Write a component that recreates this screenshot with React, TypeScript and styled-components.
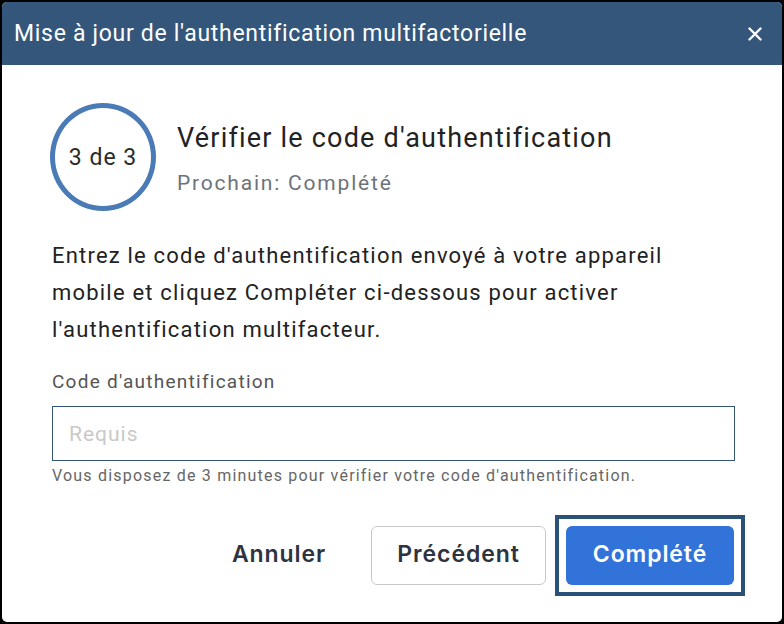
import React from "react";
import styled, { createGlobalStyle } from "styled-components";

const Global = createGlobalStyle`
  html, body { margin: 0; padding: 0; background: #000; }
  body { font-family: Roboto, "Liberation Sans", sans-serif; }
  * { box-sizing: border-box; }
`;

const Dialog = styled.div`
  margin: 2px;
  width: 780px;
  height: 620px;
  background: #fff;
  border-radius: 5px;
  overflow: hidden;
  display: flex;
  flex-direction: column;
`;

const Header = styled.div`
  height: 63px;
  background: #34567b;
  display: flex;
  align-items: center;
  justify-content: space-between;
  padding: 0 20px 0 12px;
`;

const HeaderTitle = styled.h1`
  margin: 0;
  font-family: Roboto, sans-serif;
  font-weight: 400;
  font-size: 23px;
  letter-spacing: 0.7px;
  color: #fff;
`;

const CloseButton = styled.button`
  border: none;
  background: transparent;
  color: #fff;
  padding: 0;
  display: flex;
  cursor: pointer;
`;

const Body = styled.div`
  flex: 1;
  padding: 38px 48px 0 48px;
  display: flex;
  flex-direction: column;
`;

const StepRow = styled.div`
  display: flex;
  align-items: center;
  gap: 21px;
`;

const StepCircle = styled.div`
  width: 106px;
  height: 108px;
  border-radius: 50%;
  border: 5px solid #4a7bb6;
  display: flex;
  align-items: center;
  justify-content: center;
  font-size: 23px;
  letter-spacing: 1px;
  color: #2b2b2b;
  flex-shrink: 0;
`;

const StepText = styled.div`
  display: flex;
  flex-direction: column;
  gap: 17px;
  margin-top: 2px;
`;

const StepTitle = styled.div`
  font-size: 27px;
  letter-spacing: 1.2px;
  color: #222;
`;

const StepNext = styled.div`
  font-size: 21px;
  letter-spacing: 1.8px;
  color: #6c737c;
`;

const Description = styled.p`
  margin: 26px 0 0 2px;
  font-size: 22px;
  line-height: 37px;
  letter-spacing: 1.2px;
  color: #222;
`;

const Label = styled.label`
  margin: 22px 0 0 2px;
  font-size: 19px;
  letter-spacing: 1.25px;
  color: #555;
`;

const Input = styled.input`
  margin: 13px 0 0 2px;
  width: 683px;
  height: 55px;
  border: 1px solid #34567b;
  padding: 0 16px;
  font-family: Roboto, sans-serif;
  font-size: 21px;
  letter-spacing: 1px;
  outline: none;
  &::placeholder { color: #c9c9c9; }
`;

const Helper = styled.div`
  margin: 5px 0 0 2px;
  font-size: 16px;
  letter-spacing: 1.2px;
  color: #666;
`;

const Footer = styled.div`
  display: flex;
  justify-content: flex-end;
  align-items: center;
  gap: 9px;
  padding: 0 37px 26px 0;
`;

const FocusRing = styled.div`
  border: 4px solid #2a5178;
  padding: 7px;
  display: flex;
`;

const Button = styled.button<{ $variant: "text" | "outline" | "primary" }>`
  font-family: Inter, Roboto, sans-serif;
  font-weight: 600;
  font-size: 23px;
  letter-spacing: 0.9px;
  height: 59px;
  border-radius: 6px;
  cursor: pointer;
  padding: 0 0 3px;
  display: flex;
  align-items: center;
  justify-content: center;
  ${(p) =>
    p.$variant === "text"
      ? `background: transparent; border: none; color: #2d3340; width: 130px; margin-right: 18px;`
      : p.$variant === "outline"
      ? `background: #fff; border: 1px solid #c8c8c8; color: #2d3340; width: 175px;`
      : `background: #3273d9; border: none; color: #fff; width: 168px;`}
`;

export default function App() {
  return (
    <>
      <Global />
      <Dialog>
        <Header>
          <HeaderTitle>Mise à jour de l'authentification multifactorielle</HeaderTitle>
          <CloseButton aria-label="Fermer">
            <svg width="14" height="14" viewBox="0 0 14 14">
              <path d="M1.5 1.5 L12.5 12.5 M12.5 1.5 L1.5 12.5" stroke="#fff" strokeWidth="2.4" strokeLinecap="round" />
            </svg>
          </CloseButton>
        </Header>
        <Body>
          <StepRow>
            <StepCircle>3 de 3</StepCircle>
            <StepText>
              <StepTitle>Vérifier le code d'authentification</StepTitle>
              <StepNext>Prochain: Complété</StepNext>
            </StepText>
          </StepRow>
          <Description>
            Entrez le code d'authentification envoyé à votre appareil mobile et cliquez Compléter ci-dessous pour activer l'authentification multifacteur.
          </Description>
          <Label>Code d'authentification</Label>
          <Input placeholder="Requis" />
          <Helper>Vous disposez de 3 minutes pour vérifier votre code d'authentification.</Helper>
        </Body>
        <Footer>
          <Button $variant="text">Annuler</Button>
          <Button $variant="outline">Précédent</Button>
          <FocusRing>
            <Button $variant="primary">Complété</Button>
          </FocusRing>
        </Footer>
      </Dialog>
    </>
  );
}
